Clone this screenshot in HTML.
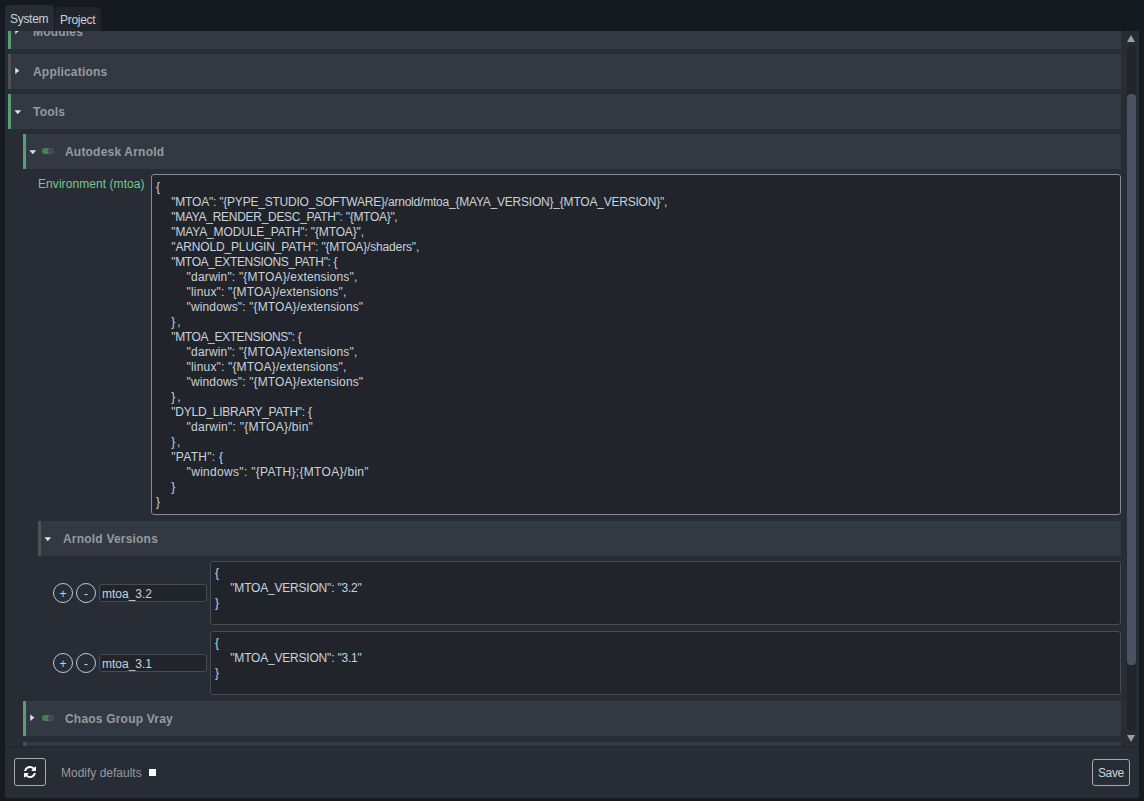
<!DOCTYPE html>
<html><head><meta charset="utf-8">
<style>
*{margin:0;padding:0;box-sizing:border-box}
html,body{width:1144px;height:801px;overflow:hidden;background:#141a1f;font-family:"Liberation Sans",sans-serif;font-size:12px;color:#c9d3dc}
.a{position:absolute}
.t{position:absolute;white-space:pre;line-height:15px}
.cl{position:absolute;white-space:pre;line-height:15px;letter-spacing:-0.2px;color:#c9d3dc}
.tab1{left:5px;top:5px;width:49px;height:26px;background:#282c34;border-radius:4px 4px 0 0}
.tab2{left:55px;top:7px;width:46px;height:24px;background:#21252b;border-radius:4px 4px 0 0}
.panel{left:5px;top:31px;width:1134px;height:767px;background:#282c34}
.view{left:5px;top:31px;width:1119px;height:715px;overflow:hidden}
.row{position:absolute;height:35px;background:#333942;border-left:3px solid #4e5254}
.g{border-left-color:#56a06f}
.hd{position:absolute;font-weight:bold;color:#969b9e;white-space:pre;line-height:15px;letter-spacing:0.2px}
.ar{position:absolute;width:0;height:0}
.down{border-left:4px solid transparent;border-right:4px solid transparent;border-top:5px solid #e6e9ec}
.right{border-top:4px solid transparent;border-bottom:4px solid transparent;border-left:5px solid #e6e9ec}
.tog{position:absolute;width:12px;height:6px;border-radius:3px;background:#44805a}
.tog:after{content:"";position:absolute;right:0;top:0;width:6px;height:6px;border-radius:3px;background:#45474a}
.box{position:absolute;background:#21252b;border:1px solid #464b54;border-radius:3px}
.circ{position:absolute;width:20px;height:20px;border:1px solid #bfccd6;border-radius:10px;text-align:center;line-height:18px;color:#c9d3dc}
.inp{position:absolute;width:108px;height:18px;background:#21252b;border:1px solid #464b54;border-radius:3px}
</style></head><body>
<div class="a tab1"></div>
<div class="a tab2"></div>
<div class="t" style="left:10px;top:12px;letter-spacing:-0.3px">System</div>
<div class="t" style="left:60px;top:13px;letter-spacing:-0.3px">Project</div>
<div class="a panel"></div>
<div class="a view">
<div class="a" style="left:-5px;top:-31px;width:1144px;height:801px">
<div class="row g" style="left:8px;top:14px;width:1113px"></div>
<svg class="a" style="left:14px;top:26px" width="7" height="10"><polygon points="1,1 5.6,4.7 1,8.4" fill="#dfe5ea" stroke="#1d2127" stroke-opacity="0.55" stroke-width="0.8" stroke-linejoin="round"/></svg>
<div class="hd" style="left:33px;top:25px">Modules</div>

<div class="row" style="left:8px;top:54px;width:1113px"></div>
<svg class="a" style="left:14px;top:66px" width="7" height="10"><polygon points="1,1 5.6,4.7 1,8.4" fill="#dfe5ea" stroke="#1d2127" stroke-opacity="0.55" stroke-width="0.8" stroke-linejoin="round"/></svg>
<div class="hd" style="left:33px;top:65px">Applications</div>

<div class="row g" style="left:8px;top:94px;width:1113px"></div>
<svg class="a" style="left:13px;top:109px" width="10" height="7"><polygon points="1,1 8.6,1 4.8,5.6" fill="#dfe5ea" stroke="#1d2127" stroke-opacity="0.55" stroke-width="0.8" stroke-linejoin="round"/></svg>
<div class="hd" style="left:33px;top:105px">Tools</div>

<div class="row g" style="left:23px;top:134px;width:1098px"></div>
<svg class="a" style="left:28px;top:149px" width="10" height="7"><polygon points="1,1 8.6,1 4.8,5.6" fill="#dfe5ea" stroke="#1d2127" stroke-opacity="0.55" stroke-width="0.8" stroke-linejoin="round"/></svg>
<div class="tog" style="left:42px;top:148px"></div>
<div class="hd" style="left:65px;top:145px">Autodesk Arnold</div>

<div class="t" style="left:38px;top:177px;color:#73c990;letter-spacing:0.07px">Environment (mtoa)</div>
<div class="box" style="left:151px;top:174px;width:970px;height:341px;border-color:#858a94"></div>
<div class="cl" style="left:156.0px;top:180px;letter-spacing:-0.200px">{</div>
<div class="cl" style="left:171.3px;top:195px;letter-spacing:-0.214px">&quot;MTOA&quot;: &quot;{PYPE_STUDIO_SOFTWARE}/arnold/mtoa_{MAYA_VERSION}_{MTOA_VERSION}&quot;,</div>
<div class="cl" style="left:171.3px;top:210px;letter-spacing:-0.291px">&quot;MAYA_RENDER_DESC_PATH&quot;: &quot;{MTOA}&quot;,</div>
<div class="cl" style="left:171.3px;top:225px;letter-spacing:-0.139px">&quot;MAYA_MODULE_PATH&quot;: &quot;{MTOA}&quot;,</div>
<div class="cl" style="left:171.3px;top:240px;letter-spacing:-0.153px">&quot;ARNOLD_PLUGIN_PATH&quot;: &quot;{MTOA}/shaders&quot;,</div>
<div class="cl" style="left:171.3px;top:255px;letter-spacing:-0.346px">&quot;MTOA_EXTENSIONS_PATH&quot;: {</div>
<div class="cl" style="left:186.6px;top:270px;letter-spacing:0.176px">&quot;darwin&quot;: &quot;{MTOA}/extensions&quot;,</div>
<div class="cl" style="left:186.6px;top:285px;letter-spacing:0.171px">&quot;linux&quot;: &quot;{MTOA}/extensions&quot;,</div>
<div class="cl" style="left:186.6px;top:300px;letter-spacing:0.124px">&quot;windows&quot;: &quot;{MTOA}/extensions&quot;</div>
<div class="cl" style="left:171.3px;top:315px;letter-spacing:2.000px">},</div>
<div class="cl" style="left:171.3px;top:330px;letter-spacing:-0.379px">&quot;MTOA_EXTENSIONS&quot;: {</div>
<div class="cl" style="left:186.6px;top:345px;letter-spacing:0.176px">&quot;darwin&quot;: &quot;{MTOA}/extensions&quot;,</div>
<div class="cl" style="left:186.6px;top:360px;letter-spacing:0.171px">&quot;linux&quot;: &quot;{MTOA}/extensions&quot;,</div>
<div class="cl" style="left:186.6px;top:375px;letter-spacing:0.124px">&quot;windows&quot;: &quot;{MTOA}/extensions&quot;</div>
<div class="cl" style="left:171.3px;top:390px;letter-spacing:2.000px">},</div>
<div class="cl" style="left:171.3px;top:405px;letter-spacing:-0.248px">&quot;DYLD_LIBRARY_PATH&quot;: {</div>
<div class="cl" style="left:186.6px;top:420px;letter-spacing:0.257px">&quot;darwin&quot;: &quot;{MTOA}/bin&quot;</div>
<div class="cl" style="left:171.3px;top:435px;letter-spacing:1.800px">},</div>
<div class="cl" style="left:171.3px;top:450px;letter-spacing:0.288px">&quot;PATH&quot;: {</div>
<div class="cl" style="left:186.6px;top:465px;letter-spacing:0.307px">&quot;windows&quot;: &quot;{PATH};{MTOA}/bin&quot;</div>
<div class="cl" style="left:171.3px;top:480px;letter-spacing:-0.200px">}</div>
<div class="cl" style="left:156.0px;top:495px;letter-spacing:-0.200px">}</div>
<div class="row" style="left:38px;top:521px;width:1083px"></div>
<svg class="a" style="left:43px;top:536px" width="10" height="7"><polygon points="1,1 8.6,1 4.8,5.6" fill="#dfe5ea" stroke="#1d2127" stroke-opacity="0.55" stroke-width="0.8" stroke-linejoin="round"/></svg>
<div class="hd" style="left:63px;top:532px">Arnold Versions</div>

<div class="circ" style="left:53px;top:583px;line-height:21px">+</div>
<div class="circ" style="left:76px;top:583px;line-height:20px">-</div>
<div class="inp" style="left:99px;top:584px"></div>
<div class="t" style="left:102px;top:587px">mtoa_3.2</div>
<div class="box" style="left:210px;top:561px;width:911px;height:64px"></div>
<div class="cl" style="left:215.0px;top:566px;letter-spacing:-0.200px">{</div>
<div class="cl" style="left:230.3px;top:581px;letter-spacing:-0.200px">&quot;MTOA_VERSION&quot;: &quot;3.2&quot;</div>
<div class="cl" style="left:215.0px;top:596px;letter-spacing:-0.200px">}</div>
<div class="circ" style="left:53px;top:653px;line-height:21px">+</div>
<div class="circ" style="left:76px;top:653px;line-height:20px">-</div>
<div class="inp" style="left:99px;top:654px"></div>
<div class="t" style="left:102px;top:657px">mtoa_3.1</div>
<div class="box" style="left:210px;top:631px;width:911px;height:64px"></div>
<div class="cl" style="left:215.0px;top:636px;letter-spacing:-0.200px">{</div>
<div class="cl" style="left:230.3px;top:651px;letter-spacing:-0.200px">&quot;MTOA_VERSION&quot;: &quot;3.1&quot;</div>
<div class="cl" style="left:215.0px;top:666px;letter-spacing:-0.200px">}</div>
<div class="row g" style="left:23px;top:701px;width:1098px"></div>
<svg class="a" style="left:29px;top:713px" width="7" height="10"><polygon points="1,1 5.6,4.7 1,8.4" fill="#dfe5ea" stroke="#1d2127" stroke-opacity="0.55" stroke-width="0.8" stroke-linejoin="round"/></svg>
<div class="tog" style="left:42px;top:715px"></div>
<div class="hd" style="left:65px;top:712px">Chaos Group Vray</div>

<div class="row" style="left:23px;top:742px;width:1098px"></div>
</div>
</div>
<div class="a" style="left:1127px;top:46px;width:9px;height:685px;background:#21252b;border-radius:4px"></div>
<div class="a" style="left:1127px;top:94px;width:9px;height:571px;background:#4b5362;border-radius:4px"></div>
<div class="ar" style="left:1127px;top:35px;border-left:4px solid transparent;border-right:4px solid transparent;border-bottom:7px solid #9d9d9d"></div>
<div class="ar" style="left:1127px;top:735px;border-left:4px solid transparent;border-right:4px solid transparent;border-top:7px solid #9d9d9d"></div>
<div class="a" style="left:5px;top:746px;width:1134px;height:1px;background:#21252b"></div>
<div class="a" style="left:14px;top:758px;width:32px;height:28px;border:1px solid #aaaaaa;border-radius:3px;background:#262a31"></div>
<svg class="a" style="left:24px;top:766px" width="12" height="12" viewBox="0 0 1536 1536"><path fill="#ffffff" d="M1511 928q0 5-1 7-64 268-268 434.5T764 1536q-146 0-282.5-55T238 1324l-129 128q-19 19-45 19t-45-19-19-45V959q0-26 19-45t45-19h448q26 0 45 19t19 45-19 45l-137 137q71 66 161 102t187 36q134 0 250-65t186-179q11-17 53-117 8-23 30-23h192q13 0 22.5 9.5t9.5 22.5zm25-800v448q0 26-19 45t-45 19h-448q-26 0-45-19t-19-45 19-45l138-138Q969 256 768 256q-134 0-250 65T332 500q-11 17-53 117-8 23-30 23H50q-13 0-22.5-9.5T18 608v-7q65-268 270-434.5T768 0q146 0 284 55.5T1297 212l130-129q19-19 45-19t45 19 19 45z"/></svg>
<div class="t" style="left:61px;top:766px;color:#969b9e">Modify defaults</div>
<div class="a" style="left:149px;top:769px;width:6.5px;height:7px;background:#fff"></div>
<div class="a" style="left:1092px;top:759px;width:38px;height:27px;border:1px solid #aaaaaa;border-radius:3px"></div>
<div class="t" style="left:1098px;top:766px;letter-spacing:-0.4px">Save</div>
</body></html>
